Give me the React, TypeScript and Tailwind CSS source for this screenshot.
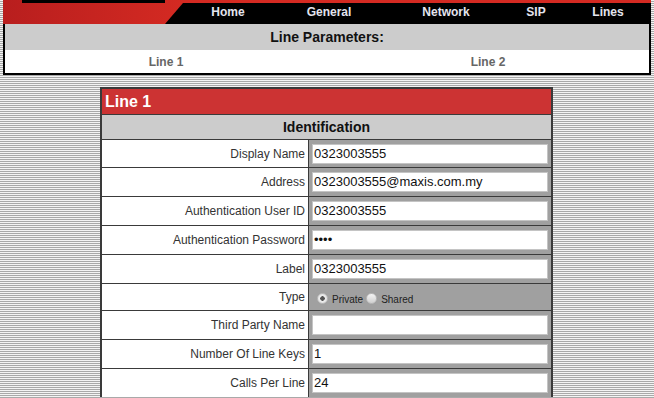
import React from "react";

const rows: { label: string; value?: string; h: string; kind?: "radio" }[] = [
  { label: "Display Name", value: "0323003555", h: "h-[27px]" },
  { label: "Address", value: "0323003555@maxis.com.my", h: "h-[28px]" },
  { label: "Authentication User ID", value: "0323003555", h: "h-[28px]" },
  { label: "Authentication Password", value: "••••", h: "h-[28px]" },
  { label: "Label", value: "0323003555", h: "h-[28px]" },
  { label: "Type", h: "h-[26px]", kind: "radio" },
  { label: "Third Party Name", value: "", h: "h-[28px]" },
  { label: "Number Of Line Keys", value: "1", h: "h-[28px]" },
  { label: "Calls Per Line", value: "24", h: "h-[28px]" },
];

export default function App() {
  return (
    <div
      className="w-[654px] h-[398px] overflow-hidden font-['Liberation_Sans',Arial,sans-serif] bg-[repeating-linear-gradient(to_bottom,#f4f4f4_0px,#f4f4f4_1px,#a9a9a9_1px,#a9a9a9_2px)]"
    >
      <div className="ml-[3px] w-[648px]">
        {/* header */}
        <div className="flex h-[24px] bg-black">
          <div className="w-[183px] h-full bg-[linear-gradient(to_right,#b81e1e,#d42a22)] [clip-path:polygon(0_0,100%_0,100%_3px,calc(100%-18px)_100%,0_100%)]">
            <div className="ml-[19px] w-[143px] h-[3px] bg-black" />
          </div>
          <div className="flex-1 flex flex-col">
            <div className="h-[3px] bg-[#d42a22]" />
            <div className="flex-1 flex items-center pb-[3px] text-[12px] font-bold text-[#e4e4ee]">
              <span className="w-[90px] text-center">Home</span>
              <span className="w-[112px] text-center">General</span>
              <span className="w-[122px] text-center">Network</span>
              <span className="w-[58px] text-center">SIP</span>
              <span className="w-[86px] text-center">Lines</span>
            </div>
          </div>
        </div>
        {/* line parameters box */}
        <div className="border-x-2 border-b-2 border-black">
          <div className="h-[26px] bg-[#cccccc] flex items-center justify-center text-[14px] font-bold text-[#111]">
            Line Parameters:
          </div>
          <div className="h-[23px] bg-white flex items-center text-[12px] font-bold text-[#666]">
            <span className="w-[322px] text-center">Line 1</span>
            <span className="flex-1 text-center">Line 2</span>
          </div>
        </div>
      </div>

      {/* main table */}
      <div className="ml-[100px] mt-[12px] w-[453px] border-2 border-b-0 border-[#3a3a3a] bg-[#3a3a3a]">
        <div className="h-[25px] bg-[#cc3333] flex items-center pl-[3px] text-[16px] font-bold text-white">
          Line 1
        </div>
        <div className="mt-[1px] h-[24px] bg-[#cccccc] flex items-center justify-center text-[14px] font-bold text-[#111]">
          Identification
        </div>
        {rows.map((r) => (
          <div key={r.label} className={`flex mt-[1px] ${r.h}`}>
            <div className="w-[206px] bg-white flex items-center justify-end pr-[3px] text-[12px] text-[#333]">
              {r.label}
            </div>
            <div className="flex-1 ml-[1px] bg-[#a0a0a0] flex items-center pl-[3px] pr-[3px]">
              {r.kind === "radio" ? (
                <div className="flex items-center text-[10px] text-[#222] pl-[5px] pt-[2px]">
                  <span className="w-[11px] h-[11px] rounded-full bg-[radial-gradient(circle,#555_0,#555_2px,#eee_2.5px,#d8d8d8_100%)] border border-[#bbb]" />
                  <span className="ml-[4px] mt-[3px]">Private</span>
                  <span className="ml-[3px] w-[11px] h-[11px] rounded-full bg-[linear-gradient(#f4f4f4,#d0d0d0)] border border-[#bbb]" />
                  <span className="ml-[4px] mt-[3px]">Shared</span>
                </div>
              ) : (
                <div className="w-[236px] h-[20px] bg-white border border-[#c4c4c4] flex items-center pl-[1px] text-[13px] text-[#111]">
                  {r.value}
                </div>
              )}
            </div>
          </div>
        ))}
      </div>
    </div>
  );
}
